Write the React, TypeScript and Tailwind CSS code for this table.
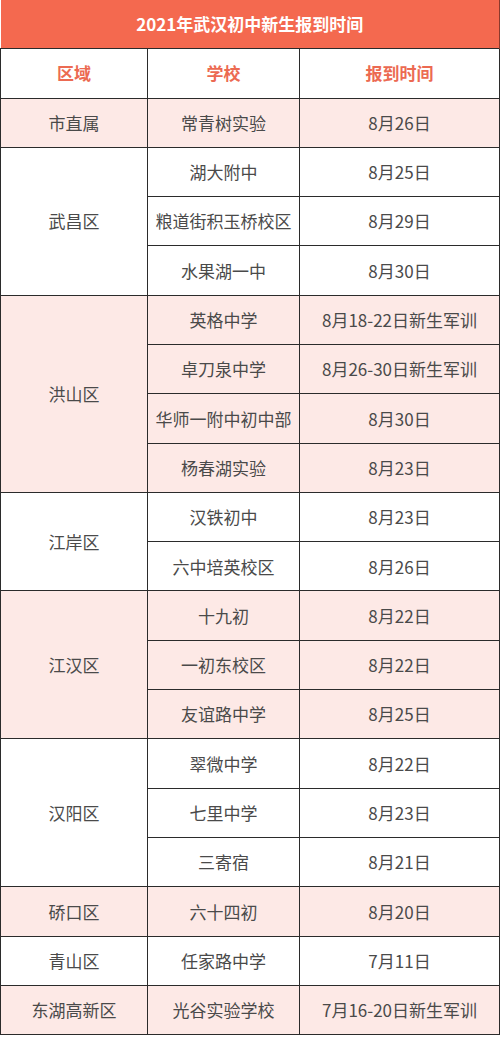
import React from 'react';

type Group = { area: string; pink: boolean; rows: [string, string][] };

const groups: Group[] = [
  { area: '市直属', pink: true, rows: [['常青树实验', '8月26日']] },
  {
    area: '武昌区',
    pink: false,
    rows: [
      ['湖大附中', '8月25日'],
      ['粮道街积玉桥校区', '8月29日'],
      ['水果湖一中', '8月30日'],
    ],
  },
  {
    area: '洪山区',
    pink: true,
    rows: [
      ['英格中学', '8月18-22日新生军训'],
      ['卓刀泉中学', '8月26-30日新生军训'],
      ['华师一附中初中部', '8月30日'],
      ['杨春湖实验', '8月23日'],
    ],
  },
  {
    area: '江岸区',
    pink: false,
    rows: [
      ['汉铁初中', '8月23日'],
      ['六中培英校区', '8月26日'],
    ],
  },
  {
    area: '江汉区',
    pink: true,
    rows: [
      ['十九初', '8月22日'],
      ['一初东校区', '8月22日'],
      ['友谊路中学', '8月25日'],
    ],
  },
  {
    area: '汉阳区',
    pink: false,
    rows: [
      ['翠微中学', '8月22日'],
      ['七里中学', '8月23日'],
      ['三寄宿', '8月21日'],
    ],
  },
  { area: '硚口区', pink: true, rows: [['六十四初', '8月20日']] },
  { area: '青山区', pink: false, rows: [['任家路中学', '7月11日']] },
  { area: '东湖高新区', pink: true, rows: [['光谷实验学校', '7月16-20日新生军训']] },
];

const cell = 'border border-[#2b2b2b] text-center align-middle p-0';

export default function App() {
  return (
    <div className="w-[500px] bg-white" style={{ fontFamily: '"Noto Sans CJK SC", "Noto Sans", sans-serif' }}>
      <table className="w-[499px] border-collapse table-fixed text-[17px] text-[#4a4a4a]">
        <colgroup>
          <col className="w-[147px]" />
          <col className="w-[152px]" />
          <col className="w-[200px]" />
        </colgroup>
        <tbody>
          <tr className="h-[48px]">
            <td colSpan={3} className="bg-[#f4694f] text-white font-bold text-center align-middle border-r border-r-[#8a3a2c]">
              2021年武汉初中新生报到时间
            </td>
          </tr>
          <tr className="h-[50px] text-[#ec6a52] font-bold">
            <td className={cell}>区域</td>
            <td className={cell}>学校</td>
            <td className={cell}>报到时间</td>
          </tr>
          {groups.map((g) =>
            g.rows.map(([school, date], i) => (
              <tr key={g.area + school} className={g.pink ? 'h-[49.3px] bg-[#fde9e6]' : 'h-[49.3px] bg-white'}>
                {i === 0 && (
                  <td rowSpan={g.rows.length} className={cell}>
                    {g.area}
                  </td>
                )}
                <td className={cell}>{school}</td>
                <td className={cell}>{date}</td>
              </tr>
            ))
          )}
        </tbody>
      </table>
    </div>
  );
}
